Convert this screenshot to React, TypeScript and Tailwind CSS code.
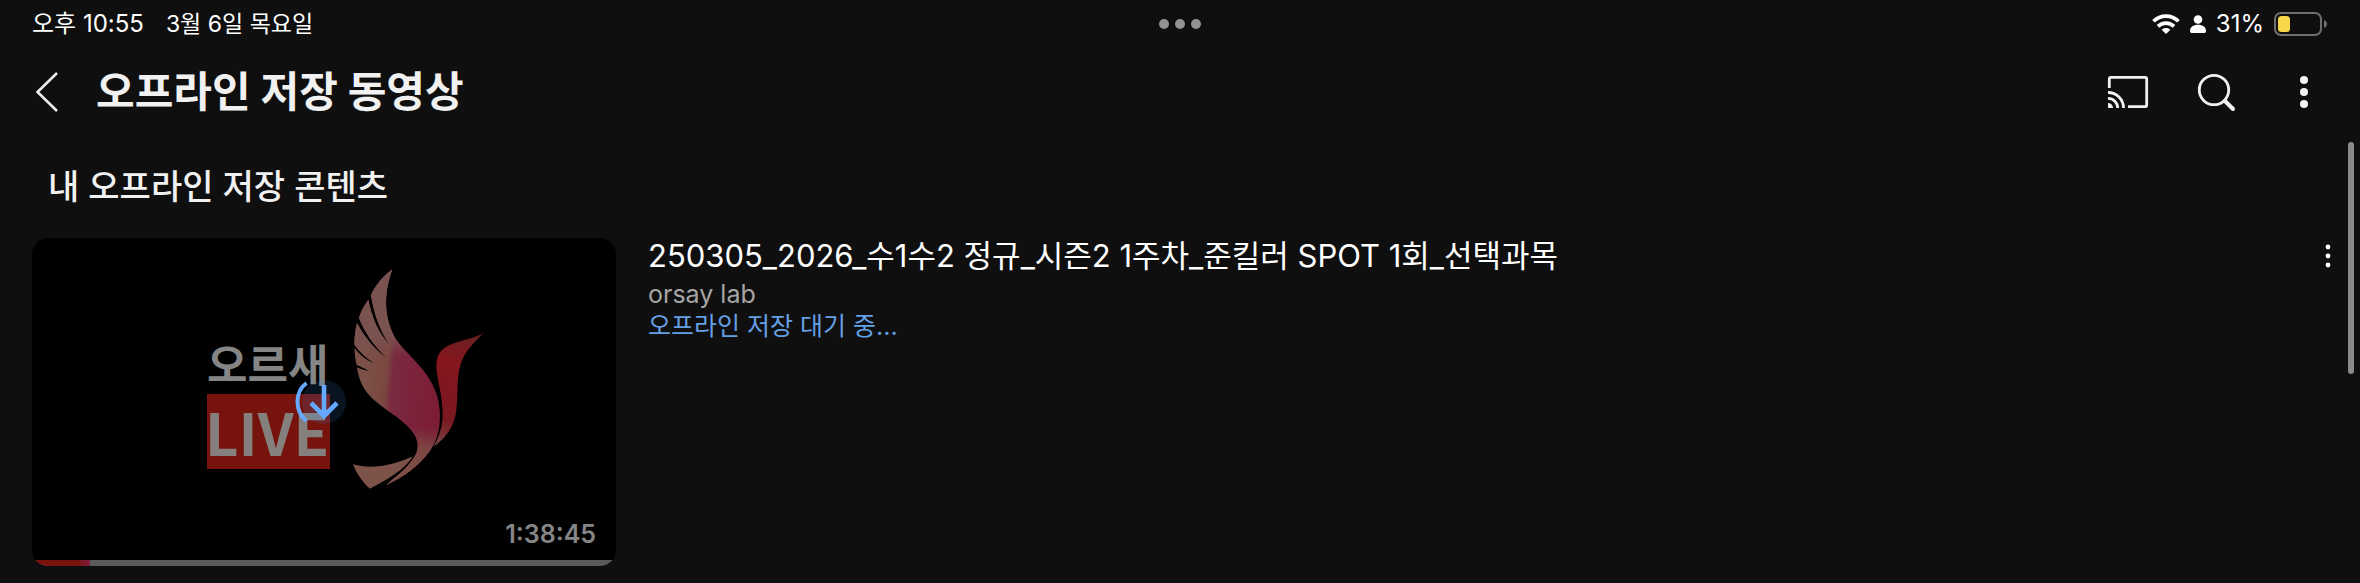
import type { ReactNode } from 'react'

interface OfflineVideo {
  id: string
  title: string
  channel: string
  status: string
  duration: string
  watched: number
}

const VIDEOS: OfflineVideo[] = [
  {
    id: 'spot-1',
    title: '250305_2026_수1수2 정규_시즌2 1주차_준킬러 SPOT 1회_선택과목',
    channel: 'orsay lab',
    status: '오프라인 저장 대기 중...',
    duration: '1:38:45',
    watched: 10,
  },
]

function WifiIcon() {
  return (
    <svg viewBox="0 0 82 60" className="h-5 w-7" fill="none" stroke="white" strokeWidth="11">
      <path d="M3.500 22 C24 1 58 1 78.500 22" />
      <path d="M17 37 C30 24 52 24 65 37" />
      <path d="M41 60 L28 47.500 C35 40 47 40 54 47.500 Z" fill="white" stroke="none" />
    </svg>
  )
}

function PersonIcon() {
  return (
    <svg viewBox="0 0 46 52" className="h-[18px] w-4" fill="white">
      <circle cx="23" cy="13" r="12.500" />
      <path d="M0 46 C0 34 10 28 23 28 C36 28 46 34 46 46 C46 50 44 52 40 52 H6 C2 52 0 50 0 46 Z" />
    </svg>
  )
}

function BatteryIcon() {
  return (
    <svg viewBox="0 0 54 24" className="h-6 w-[54px]">
      <rect x="1" y="1" width="46" height="22" rx="6" fill="none" stroke="#6f6f6f" strokeWidth="2" />
      <rect x="4" y="4" width="12" height="16" rx="3.500" fill="#f7d84a" />
      <path d="M50 8 C54 9.500 54 14.500 50 16 Z" fill="#6f6f6f" />
    </svg>
  )
}

function StatusBar() {
  return (
    <div className="grid h-12 grid-cols-3 items-center px-8 text-2xl text-white">
      <div className="flex items-baseline gap-[22px] whitespace-nowrap">
        <span>오후 10:55</span>
        <span className="text-[23px]">3월 6일 목요일</span>
      </div>
      <div className="flex justify-center gap-1.5">
        <span className="size-2.5 rounded-full bg-[#929292]" />
        <span className="size-2.5 rounded-full bg-[#929292]" />
        <span className="size-2.5 rounded-full bg-[#929292]" />
      </div>
      <div className="flex items-center justify-end gap-2.5">
        <WifiIcon />
        <PersonIcon />
        <span>31%</span>
        <BatteryIcon />
      </div>
    </div>
  )
}

function IconButton({ label, children }: { label: string; children: ReactNode }) {
  return (
    <button type="button" aria-label={label} className="flex size-12 shrink-0 items-center justify-center">
      {children}
    </button>
  )
}

function Header() {
  return (
    <header className="flex h-[88px] items-center pr-8 pl-6">
      <IconButton label="뒤로">
        <svg viewBox="0 0 48 48" className="size-12" fill="none" stroke="#f1f1f1" strokeWidth="2.500">
          <path d="M33 5 L13.500 24 L33 43" />
        </svg>
      </IconButton>
      <h1 className="ml-6 flex-1 text-[42px] leading-none font-bold text-[#f1f1f1]">오프라인 저장 동영상</h1>
      <div className="flex gap-10">
        <IconButton label="전송">
          <svg viewBox="0 0 48 48" className="size-12" fill="none" stroke="#f1f1f1" strokeWidth="2.800">
            <path d="M5.300 20 V11 Q5.300 9.300 7 9.300 H41 Q42.700 9.300 42.700 11 V37 Q42.700 38.700 41 38.700 H24" />
            <path d="M4 24.500 A15.500 15.500 0 0 1 19.500 40" />
            <path d="M4 30.300 A9.700 9.700 0 0 1 13.700 40" />
            <path d="M4 35 A5 5 0 0 1 9 40 H4 Z" fill="#f1f1f1" stroke="none" />
          </svg>
        </IconButton>
        <IconButton label="검색">
          <svg viewBox="0 0 48 48" className="size-12" fill="none" stroke="#f1f1f1">
            <circle cx="22" cy="22" r="14.700" strokeWidth="2.800" />
            <path d="M33 33 L41 41" strokeWidth="4" strokeLinecap="round" />
          </svg>
        </IconButton>
        <IconButton label="더보기">
          <svg viewBox="0 0 48 48" className="size-12" fill="#f1f1f1">
            <circle cx="24" cy="12" r="4" />
            <circle cx="24" cy="24" r="4" />
            <circle cx="24" cy="36" r="4" />
          </svg>
        </IconButton>
      </div>
    </header>
  )
}

function ThumbnailArt() {
  return (
    <svg viewBox="0 0 584 328" className="block w-full" role="img" aria-label="오르새 LIVE">
      <defs>
        <linearGradient id="wing" gradientUnits="userSpaceOnUse" x1="70" y1="380" x2="300" y2="400">
          <stop offset="0" stopColor="#7c5148" />
          <stop offset="0.300" stopColor="#7a4740" />
          <stop offset="0.380" stopColor="#7a2a40" />
          <stop offset="1" stopColor="#7c1c34" />
        </linearGradient>
        <linearGradient id="wingFade" gradientUnits="userSpaceOnUse" x1="0" y1="60" x2="0" y2="705">
          <stop offset="0" stopColor="#7a5350" />
          <stop offset="0.300" stopColor="#7a5350" stopOpacity="0.900" />
          <stop offset="0.400" stopColor="#7a5350" stopOpacity="0" />
          <stop offset="0.730" stopColor="#7d4640" stopOpacity="0" />
          <stop offset="0.830" stopColor="#7d4a45" stopOpacity="0.900" />
          <stop offset="1" stopColor="#7d5248" />
        </linearGradient>
        <linearGradient id="head" gradientUnits="userSpaceOnUse" x1="400" y1="270" x2="290" y2="590">
          <stop offset="0" stopColor="#6e1f20" />
          <stop offset="0.250" stopColor="#85151e" />
          <stop offset="0.750" stopColor="#7a1822" />
          <stop offset="1" stopColor="#7a4a45" />
        </linearGradient>
        <path
          id="wingShape"
          d="M157 58 C125 82 103 112 93 135 C102 195 124 252 150 285 C116 250 96 204 85 149 C71 168 62 186 57 204 C75 250 104 290 138 322 C102 296 73 260 51 219 C46 240 43 262 43 284 C60 307 78 324 102 340 C79 330 58 314 44 294 C44 312 46 329 50 345 C62 350 74 356 88 363 C74 361 62 357 51 352 C56 391 72 424 102 450 C145 487 196 512 222 552 C238 578 236 601 222 622 C200 658 165 682 138 705 C190 682 240 645 270 602 C292 570 303 530 299 480 C295 430 277 398 250 361 C222 326 190 300 168 268 C139 218 124 150 157 58 Z"
        />
      </defs>
      <rect width="584" height="328" fill="#000000" />
      <rect x="175" y="156" width="123" height="75" fill="#75130c" />
      <text x="175" y="144" fontSize="44" fontWeight="700" fill="#858585">
        오르새
      </text>
      <text x="173" y="218" fontSize="58" fontWeight="700" fill="#85807e" className="font-['Noto_Sans_CJK_KR',sans-serif]">
        LIVE
      </text>
      <g transform="translate(308 12) scale(0.3333)">
        <use href="#wingShape" fill="url(#wing)" />
        <use href="#wingShape" fill="url(#wingFade)" />
        <path
          d="M434 246 C410 266 350 270 313 294 C292 308 287 335 290 362 C294 400 308 440 308 492 C308 535 294 565 281 590 C320 562 344 527 349 480 C355 430 349 385 362 342 C375 302 405 275 434 246 Z"
          fill="url(#head)"
        />
        <path d="M39 643 C95 660 163 645 218 619 C196 660 130 695 90 716 C70 700 50 672 39 643 Z" fill="#7d5248" />
      </g>
    </svg>
  )
}

function Thumbnail({ video }: { video: OfflineVideo }) {
  return (
    <a href={`#${video.id}`} className="relative block w-[584px] shrink-0 overflow-hidden rounded-2xl">
      <ThumbnailArt />
      <span className="absolute right-5 bottom-4 text-[25px] leading-8 font-semibold text-[#868686]">
        {video.duration}
      </span>
      <div className="absolute inset-0 flex items-center justify-center">
        <svg viewBox="0 0 64 64" className="size-16" fill="none" stroke="#65a8ff">
          <circle cx="32" cy="32" r="22" fill="#3ea6ff" fillOpacity="0.130" stroke="none" />
          <path d="M14.500 13 C2.500 22 2.500 41 14.500 51" strokeWidth="4" />
          <path d="M32 15 V47 M19 33 L32 46 L45 33" strokeWidth="4.600" />
        </svg>
      </div>
      <div className="absolute inset-x-0 bottom-0 h-1.5 bg-[#5b5b5b]">
        <div className="h-full bg-linear-to-r from-[#7a130c] from-80% to-[#7d1c40]" style={{ width: `${video.watched}%` }} />
      </div>
    </a>
  )
}

function VideoRow({ video }: { video: OfflineVideo }) {
  return (
    <li className="flex items-start">
      <Thumbnail video={video} />
      <div className="ml-8 flex-1">
        <h3 className="pb-1 text-[31px] leading-9 text-white">{video.title}</h3>
        <p className="text-[25px] leading-8 text-[#a5a5a5]">{video.channel}</p>
        <p className="text-[25px] leading-8 text-[#659fe4]">{video.status}</p>
      </div>
      <button type="button" aria-label="작업 메뉴" className="flex h-9 w-8 items-center justify-center">
        <svg viewBox="0 0 8 24" className="h-6 w-2" fill="white">
          <circle cx="4" cy="3" r="2.400" />
          <circle cx="4" cy="12" r="2.400" />
          <circle cx="4" cy="21" r="2.400" />
        </svg>
      </button>
    </li>
  )
}

export default function App() {
  return (
    <div className="relative min-h-screen bg-[#0f0f0f] font-['Inter','Noto_Sans_CJK_KR',sans-serif]">
      <StatusBar />
      <Header />
      <main>
        <h2 className="px-12 pt-[26px] pb-[26px] text-[34px] leading-[50px] font-medium text-[#f1f1f1]">
          내 오프라인 저장 콘텐츠
        </h2>
        <ul className="pr-4 pl-8">
          {VIDEOS.map(video => (
            <VideoRow key={video.id} video={video} />
          ))}
        </ul>
      </main>
      {/* Scroll indicator */}
      <div className="absolute top-[142px] right-1.5 h-[232px] w-1.5 rounded-full bg-[#8a8a8a]" />
    </div>
  )
}
